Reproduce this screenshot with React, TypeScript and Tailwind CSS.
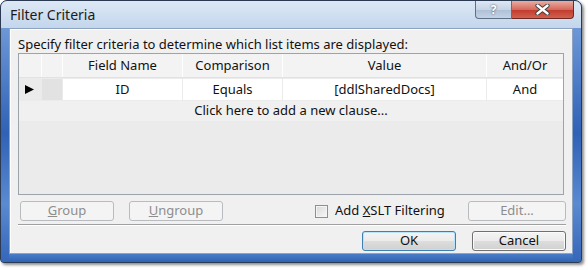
import React from 'react'

const font = { fontFamily: '"Noto Sans", "Open Sans", sans-serif' }

// Botón estilo Windows 7 (normal, deshabilitado o predeterminado)
function WinButton({
  children,
  width,
  disabled,
  primary,
}: {
  children: React.ReactNode
  width: string
  disabled?: boolean
  primary?: boolean
}) {
  if (disabled) {
    return (
      <div
        className={`${width} h-[20px] rounded-[3px] border border-[#b8bcc0] bg-[#f4f4f4] text-[#8d8d8d] text-[13px] flex items-center justify-center`}
      >
        {children}
      </div>
    )
  }
  return (
    <div
      className={`${width} h-[20px] rounded-[3px] border ${
        primary ? 'border-[#3c7fb1] shadow-[inset_0_0_0_1px_#b9e3f8]' : 'border-[#707070] shadow-[inset_0_0_0_1px_#fbfbfb]'
      } bg-[linear-gradient(to_bottom,#f4f4f4,#ebebeb_50%,#dddddd_51%,#d0d0d0)] text-[#111] text-[13px] flex items-center justify-center`}
    >
      {children}
    </div>
  )
}

export default function App() {
  return (
    <div className="w-[588px] h-[270px] bg-white overflow-hidden" style={font}>
      {/* Marco de la ventana */}
      <div className="w-[582px] h-[263px] rounded-t-[7px] rounded-b-[4px] border border-[#2b3a50] bg-[#3f70c0] shadow-[2px_2px_3px_rgba(0,0,0,0.45)] flex flex-col overflow-hidden">
        {/* Barra de título */}
        <div className="h-[27px] shrink-0 bg-[linear-gradient(to_bottom,#dde8f5,#c3d6ec)] flex items-start">
          <span className="pl-[9px] pt-[5px] text-[14px] text-[#1b1b1b] leading-[17px]">Filter Criteria</span>
          <div className="ml-auto mr-[7px] flex">
            <div className="w-[37px] h-[18px] rounded-bl-[4px] border border-[#5e6f86] border-t-0 bg-[linear-gradient(to_bottom,#dfe8f3,#c6d4e5_50%,#aebfd6_51%,#c3d3e6)] flex items-center justify-center text-[12px] font-bold text-white [text-shadow:0_0_2px_#333]">
              ?
            </div>
            <div className="w-[62px] h-[18px] rounded-br-[4px] border border-[#6b2a24] border-t-0 border-l-0 bg-[linear-gradient(to_bottom,#eaaca2,#d66a5c_50%,#c03a2c_51%,#d2604f)] flex items-center justify-center">
              <svg width="15" height="11" viewBox="0 0 15 11">
                <path d="M2.5 1.5 L12.5 9.5 M12.5 1.5 L2.5 9.5" stroke="#3a3a3a" strokeWidth="4.2" strokeLinecap="round" />
                <path d="M2.5 1.5 L12.5 9.5 M12.5 1.5 L2.5 9.5" stroke="#ffffff" strokeWidth="2.4" strokeLinecap="round" />
              </svg>
            </div>
          </div>
        </div>

        {/* Cuerpo: bordes laterales azules + área cliente */}
        <div className="flex-1 min-h-0 flex">
          <div className="w-[8px] shrink-0 bg-[linear-gradient(to_bottom,#6d97d6,#2f62b6_45%,#5a8ad0_75%,#3566b8)]" />
          <div className="flex-1 flex flex-col">
            <div className="flex-1 border border-[#8ea3bf] bg-[#f0f0f0] shadow-[inset_1px_1px_0_#ffffff] flex flex-col">
              <div className="pl-[8px] pt-[7px] h-[24px] text-[13px] text-[#111] leading-[16px]">
                Specify filter criteria to determine which list items are displayed:
              </div>

              {/* Grilla de cláusulas */}
              <div className="ml-[8px] w-[546px] h-[142px] border border-[#9da3ab] bg-[#ebebeb] text-[13px] text-[#111]">
                <div className="flex h-[24px] bg-[#f3f3f3] border-b border-[#e2e2e2]">
                  <div className="w-[23px] border-r border-[#fdfdfd]" />
                  <div className="w-[21px] border-r border-[#fdfdfd]" />
                  <div className="w-[120px] border-r border-[#fdfdfd] flex items-center justify-center">Field Name</div>
                  <div className="w-[100px] border-r border-[#fdfdfd] flex items-center justify-center">Comparison</div>
                  <div className="w-[204px] border-r border-[#fdfdfd] flex items-center justify-center">Value</div>
                  <div className="w-[76px] flex items-center justify-center">And/Or</div>
                </div>
                <div className="flex h-[21px] mt-[1px] gap-[1px]">
                  <div className="w-[22px] bg-[#ebebeb] flex items-center pl-[6px]">
                    <svg width="9" height="9" viewBox="0 0 9 9">
                      <path d="M0 0 L9 4.5 L0 9 Z" fill="#000" />
                    </svg>
                  </div>
                  <div className="w-[20px] bg-[#e2e2e2]" />
                  <div className="w-[119px] bg-white flex items-center justify-center">ID</div>
                  <div className="w-[99px] bg-white flex items-center justify-center">Equals</div>
                  <div className="w-[203px] bg-white flex items-center justify-center">[ddlSharedDocs]</div>
                  <div className="w-[76px] bg-white flex items-center justify-center">And</div>
                </div>
                <div className="h-[20px] mt-[1px] bg-[#f0f0f0] flex items-center justify-center">
                  Click here to add a new clause...
                </div>
              </div>

              {/* Botones de agrupación y filtro XSLT */}
              <div className="flex items-center h-[20px] mt-[6px] ml-[10px]">
                <WinButton width="w-[94px]" disabled>
                  <span><span className="underline">G</span>roup</span>
                </WinButton>
                <div className="ml-[15px]">
                  <WinButton width="w-[94px]" disabled>
                    <span><span className="underline">U</span>ngroup</span>
                  </WinButton>
                </div>
                <div className="ml-[92px] w-[13px] h-[13px] border border-[#8f8f8f] bg-[linear-gradient(135deg,#d8d8d8,#f8f8f8)] shadow-[inset_0_0_0_1px_#f4f4f4]" />
                <span className="ml-[7px] text-[13px] text-[#111]">
                  Add <span className="underline">X</span>SLT Filtering
                </span>
                <div className="ml-auto mr-[6px]">
                  <WinButton width="w-[98px]" disabled>
                    Edit...
                  </WinButton>
                </div>
              </div>

              <div className="ml-[8px] mr-[6px] mt-[3px] h-[2px] border-t border-[#a0a0a0] border-b border-b-white" />

              <div className="flex justify-end h-[20px] mt-[5px] mr-[6px] gap-[16px]">
                <WinButton width="w-[94px]" primary>
                  OK
                </WinButton>
                <WinButton width="w-[94px]">Cancel</WinButton>
              </div>
            </div>
            <div className="h-[8px] shrink-0 bg-[linear-gradient(to_bottom,#4a7cc6,#2f62b6)]" />
          </div>
          <div className="w-[8px] shrink-0 bg-[linear-gradient(to_bottom,#6d97d6,#2f62b6_45%,#5a8ad0_75%,#3566b8)]" />
        </div>
      </div>
    </div>
  )
}
